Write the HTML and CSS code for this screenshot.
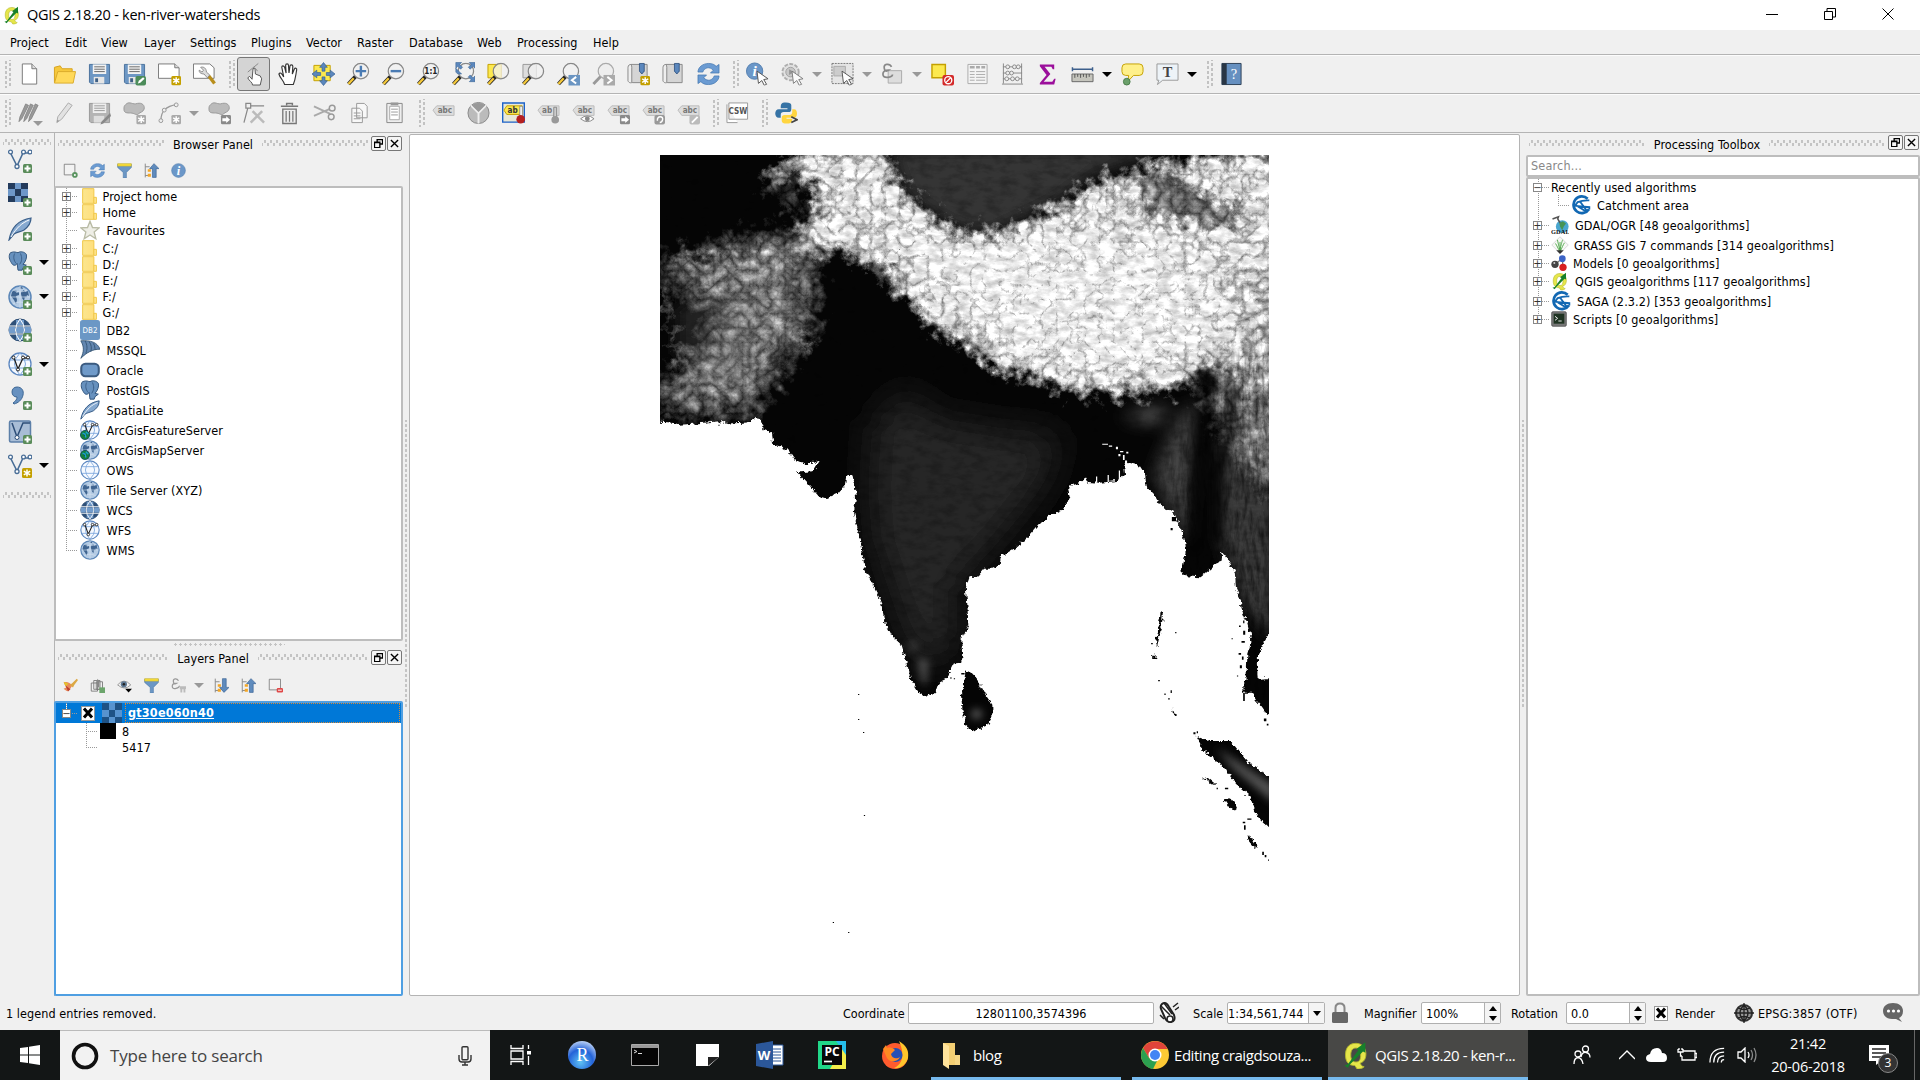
FILE: index.html
```html
<!DOCTYPE html>
<html lang="en">
<head>
<meta charset="utf-8">
<title>QGIS 2.18.20 - ken-river-watersheds</title>
<link rel="stylesheet" href="styles.css">
</head>
<body>
<svg class="defs" width="0" height="0">
<defs>
<linearGradient id="gold" x1="0" x2="1"><stop offset="0" stop-color="#fbe68f"/><stop offset="1" stop-color="#ffdf7c"/></linearGradient>
<radialGradient id="ball" cx=".45" cy=".75" r=".8"><stop offset="0" stop-color="#5fc3f5"/><stop offset=".55" stop-color="#2463d8"/><stop offset="1" stop-color="#cfe0fa"/></radialGradient>
<symbol id="badge-plus" viewBox="0 0 24 24"><rect x="15" y="15" width="9" height="9" rx="1.5" fill="#5a8c5a"/><path d="M19.500 16.500v6M16.500 19.500h6" stroke="#fff" stroke-width="2"/></symbol>
<symbol id="badge-star" viewBox="0 0 24 24"><rect x="14" y="14" width="10" height="10" rx="1.500" fill="#c4a000"/><path d="M19 15.500v7M15.800 17.200l6.400 3.600M15.800 20.800l6.400-3.600" stroke="#fff" stroke-width="1.500"/></symbol>
<symbol id="badge-star-g" viewBox="0 0 24 24"><rect x="14" y="14" width="10" height="10" rx="1.500" fill="#aaa"/><path d="M19 15.500v7M15.800 17.200l6.400 3.600M15.800 20.800l6.400-3.600" stroke="#fff" stroke-width="1.500"/></symbol>
<symbol id="badge-arrow" viewBox="0 0 24 24"><rect x="13.500" y="14" width="10.500" height="10" rx="1.500" fill="#8a8a8a"/><path d="M15 17.500h4v-2l4 3.500-4 3.500v-2h-4z" fill="#fff"/></symbol>
<symbol id="arrow-cursor" viewBox="0 0 24 24"><path d="M11.500 9l11.500 8-4.500.8 3 5-2.500 1-2.500-5-3.500 3z" fill="#fff" stroke="#555" stroke-width="1"/></symbol>
<symbol id="q" viewBox="0 0 24 24"><path d="M12 2C5 2 3 7 3 12s2 9 8 9l2 3c2 0 5-.5 6-2-2 0-3-2-3.500-3C19 18 20.500 15 20.500 11S18 2 12 2zm0 4c3 0 4 3 4 6 0 4-1 6-4 6s-4.500-2-4.500-6S9 6 12 6z" fill="#e6e64a" stroke="#b3b82e" stroke-width=".8"/><path d="M2 21l3-1 9-12-2-1 8-6v9l-2-1L7 20l-2 3z" fill="#17802a"/></symbol>
<symbol id="new" viewBox="0 0 24 24"><path d="M4.500 1.500h10l5 5v16h-15z" fill="#fff" stroke="#777"/><path d="M14.500 1.500v5h5" fill="#ddd" stroke="#777"/></symbol>
<symbol id="open" viewBox="0 0 24 24"><path d="M1.500 21V5l6-1.500 2 3H20V9" fill="#f6c83c" stroke="#d6a21e"/><path d="M1.500 21.500L5 9.500h18.500L21 21.500z" fill="#ffd95a" stroke="#d9aa2a"/></symbol>
<symbol id="save" viewBox="0 0 24 24"><path d="M1.500 2h21v20H3l-1.500-1.500z" fill="#6d97c4" stroke="#49719c"/><path d="M5 2h14v10H5z" fill="#f2f2f2"/><path d="M6.500 4.500h11M6.500 7h11M6.500 9.500h11" stroke="#666"/><path d="M6 15h11v7H6z" fill="#e6e6e6"/><path d="M7.500 16.500h3v4h-3z" fill="#3e5f85"/></symbol>
<symbol id="save-g" viewBox="0 0 24 24"><path d="M1.500 2h21v20H3l-1.500-1.500z" fill="#b4b4b4" stroke="#999"/><path d="M5 2h14v10H5z" fill="#eee"/><path d="M6.500 4.500h11M6.500 7h11M6.500 9.500h11" stroke="#999"/><path d="M6 15h11v7H6z" fill="#ddd"/><path d="M23 12l-9 9-1 3 3-1 8-8z" fill="#888"/></symbol>
<symbol id="saveas" viewBox="0 0 24 24"><use href="#save"/><rect x="13" y="14" width="11" height="10" rx="2" fill="#4c8c5a"/><path d="M15.500 22l1-3 4.500-3.500 1.500 1.500-4.500 4z" fill="#fff"/></symbol>
<symbol id="compose" viewBox="0 0 24 24"><path d="M.5 1.500h17l4.500 4v11H.5z" fill="#fff" stroke="#777"/><path d="M17.500 1.500v4H22" fill="#ddd" stroke="#777"/><use href="#badge-star"/></symbol>
<symbol id="manage" viewBox="0 0 24 24"><path d="M.5 1.500h17l4.500 4v11H.5z" fill="#fff" stroke="#777"/><path d="M16.500 14l6 8" stroke="#b88e1c" stroke-width="3.500"/><path d="M8 5c3-1 6 1 6 5l3.500 3-2.500 3-3.500-4C8 12 6 10 6.500 8l3 2 1.500-2z" fill="#ddd" stroke="#777" stroke-width=".8"/></symbol>
<symbol id="touch" viewBox="0 0 24 24"><path d="M11 23.500c0-3-3.500-4-5-7.500l2-1.500 2.500 3 1-11 2-.5.500 6 5 2 1.500 3-1.500 6.500z" fill="#fff" stroke="#555"/><path d="M6 10L17 1M12 5c2 2 3 1 4 4" stroke="#888" fill="none"/></symbol>
<symbol id="hand" viewBox="0 0 24 24"><path d="M8 23c-1-4-5-7-6-11 1-2 3-1 5 3L5 5c0-2 2-2 3 0l1.500 6L9 3c0-2 3-2 3 0l.5 8 1-7c0-2 3-2 3 0L16 12l2-5c1-2 3-1 2.500 1-1 5-1 9-3.500 15z" fill="#fff" stroke="#333" stroke-width="1.200"/></symbol>
<symbol id="panto" viewBox="0 0 24 24"><path d="M2 3h17v16H2z" fill="#fce94f" stroke="#c4a000"/><g fill="#5b87bd" stroke="#315e94" stroke-width=".7"><path d="M12 0l4 5h-2.500v4h-3V5H8zM12 24l4-5h-2.500v-4h-3v4H8zM0 12l5-4v2.500h4v3H5V16zM24 12l-5-4v2.500h-4v3h4V16z"/></g></symbol>
<symbol id="lens" viewBox="0 0 24 24"><path d="M1.500 22.500L9 14.500" stroke="#222" stroke-width="4"/><path d="M1.500 22.500L7 16.500" stroke="#f5c93b" stroke-width="2.500"/><circle cx="14.500" cy="9" r="8" fill="#f1f1f1" fill-opacity=".75" stroke="#888" stroke-width="1.300"/></symbol>
<symbol id="zin" viewBox="0 0 24 24"><use href="#lens"/><path d="M14.500 3.500v11M9 9h11" stroke="#4a7bb3" stroke-width="2.500"/></symbol>
<symbol id="zout" viewBox="0 0 24 24"><use href="#lens"/><path d="M9 9h11" stroke="#4a7bb3" stroke-width="2.500"/></symbol>
<symbol id="z11" viewBox="0 0 24 24"><use href="#lens"/><text x="14.500" y="12.200" font-size="8.500" font-weight="bold" text-anchor="middle" fill="#222">1:1</text></symbol>
<symbol id="zfull" viewBox="0 0 24 24"><use href="#lens"/><path d="M4 0h6L8 2l3 3-2 2-3-3-2 2zM24 0h-6l2 2-3 3 2 2 3-3 2 2zM24 20h-6l2-2-3-3 2-2 3 3 2-2zM4 10V6l6 6H6z" fill="#5b87bd" stroke="#3c6594" stroke-width=".6"/></symbol>
<symbol id="zsel" viewBox="0 0 24 24"><path d="M1 2h14v14H1z" fill="#fce94f" stroke="#c4a000"/><use href="#lens"/></symbol>
<symbol id="zlay" viewBox="0 0 24 24"><path d="M1 2h14v14H1z" fill="#ddd" stroke="#999"/><use href="#lens"/></symbol>
<symbol id="zlast" viewBox="0 0 24 24"><use href="#lens"/><path d="M12 13h12v11H12z" fill="#6b95c2"/><path d="M20 15l-4.500 3.500L20 22" fill="none" stroke="#fff" stroke-width="2"/></symbol>
<symbol id="znext" viewBox="0 0 24 24"><path d="M1.500 22.500L9 14.500" stroke="#999" stroke-width="3"/><circle cx="14.500" cy="9" r="8" fill="#eee" stroke="#aaa" stroke-width="1.300"/><path d="M12 13h12v11H12z" fill="#aaa"/><path d="M16 15l4.500 3.500L16 22" fill="none" stroke="#fff" stroke-width="2"/></symbol>
<symbol id="book" viewBox="0 0 24 24"><path d="M4 2h17v19H6c-2 0-2-2-2-2z" fill="#d5d5d5" stroke="#888"/><path d="M4 2c-3 0-3 3-3 4v13c1 3 4 2 4 2V5C5 3 4 2 4 2z" fill="#eee" stroke="#888"/><path d="M13 1h5v8l-2.500 3L13 9z" fill="#5b87bd" stroke="#274b78" stroke-width=".8"/></symbol>
<symbol id="booknew" viewBox="0 0 24 24"><use href="#book"/><use href="#badge-star"/></symbol>
<symbol id="refresh" viewBox="0 0 24 24"><path d="M1 10C1 5 6 1 12 1c4 0 6 1 8 3l3-2v9h-9l3-3c-4-4-9-3-11 2zM23 14c0 5-5 9-11 9-4 0-6-1-8-3l-3 2v-9h9l-3 3c4 4 9 3 11-2z" fill="#6b9bd2" stroke="#3d72ad" stroke-width=".7"/></symbol>
<symbol id="info" viewBox="0 0 24 24"><circle cx="12" cy="12" r="11" fill="#6b97c8" stroke="#5580b0"/><text x="12" y="19" text-anchor="middle" font-family="Liberation Serif" font-style="italic" font-weight="bold" font-size="20" fill="#fff">i</text></symbol>
<symbol id="identify" viewBox="0 0 24 24"><circle cx="9" cy="9" r="8.500" fill="#6b97c8" stroke="#5580b0"/><text x="9" y="14.500" text-anchor="middle" font-family="Liberation Serif" font-style="italic" font-weight="bold" font-size="16" fill="#fff">i</text><use href="#arrow-cursor"/></symbol>
<symbol id="gear" viewBox="0 0 24 24" opacity=".75"><circle cx="10" cy="10" r="8.500" fill="#ddd" stroke="#999" stroke-width="2" stroke-dasharray="4 1.500"/><circle cx="10" cy="10" r="5" fill="#bbb" stroke="#888"/><path d="M8.500 7l5 3-5 3z" fill="#777"/><use href="#arrow-cursor"/></symbol>
<symbol id="select" viewBox="0 0 24 24"><path d="M1 1h22v21H1z" fill="#e5e5e5" stroke="#777" stroke-dasharray="2 1"/><path d="M3 4h12v10H3z" fill="#ccc" stroke="#aaa"/><use href="#arrow-cursor"/></symbol>
<symbol id="eps" viewBox="0 0 24 24"><path d="M7.500 8.500h14v13h-14z" fill="#ddd" stroke="#aaa"/><path d="M11 4.500Q9.500 1.500 6 2T3.500 6.500 8 8Q2 8 2 12t5 3.500 5-3" fill="none" stroke="#888" stroke-width="1.800"/></symbol>
<symbol id="deselect" viewBox="0 0 24 24"><path d="M1 2h14v14H1z" fill="#fce94f" stroke="#c4a000" stroke-width="1.500"/><rect x="12" y="13" width="12" height="11" rx="2" fill="#d42a2a"/><circle cx="18" cy="18.500" r="3.700" fill="none" stroke="#fff" stroke-width="1.400"/><path d="M15.500 21l5-5" stroke="#fff" stroke-width="1.400"/></symbol>
<symbol id="table" viewBox="0 0 24 24"><path d="M2 2h20v20H2z" fill="#f4f4f4" stroke="#aaa"/><path d="M4 5h5M10.500 5h4M16 5h4" stroke="#aaa" stroke-width="2.500"/><path d="M4 9.500h5M10.500 9.500h9.500M4 12.500h5M10.500 12.500h9.500M4 15.500h5M10.500 15.500h9.500M4 18.500h5M10.500 18.500h9.500" stroke="#aaa"/></symbol>
<symbol id="abacus" viewBox="0 0 24 24"><path d="M2.500 1v21M21.500 1v21M2 4.500h20M2 11h20M2 17h20M1 22.500h22" stroke="#888" fill="none"/><g fill="#eee" stroke="#888"><circle cx="7" cy="4.500" r="2"/><circle cx="14" cy="4.500" r="2"/><circle cx="18" cy="4.500" r="2"/><circle cx="7" cy="11" r="2"/><circle cx="11" cy="11" r="2"/><circle cx="6" cy="17" r="2"/><circle cx="12" cy="17" r="2"/><circle cx="17" cy="17" r="2"/></g></symbol>
<symbol id="sigma" viewBox="0 0 24 24"><path d="M4 2h15v5h-1.500L16 4.500H9L15 12l-7 8h9l2-3h1.500L19 23H4v-1.500L11 13 4 4z" fill="#9b0f9b"/></symbol>
<symbol id="measure" viewBox="0 0 24 24"><path d="M1.500 5v4M22.500 5v4M1 7h22" stroke="#3d5f8c" stroke-width="1.500"/><path d="M1 12h22v8H1z" fill="#c5c5bd" stroke="#666"/><path d="M4 12v4M7 12v3M10 12v4M13 12v3M16 12v4M19 12v3" stroke="#555"/></symbol>
<symbol id="tip" viewBox="0 0 24 24"><path d="M5 1.500h14q4 0 4 4v4q0 4-4 4h-6L7 20l1-6.500H5q-4 0-4-4v-4q0-4 4-4z" fill="#fff08a" stroke="#c4a000"/><circle cx="6" cy="20" r="3.500" fill="#6ba06b" stroke="#4b7d4b"/></symbol>
<symbol id="textann" viewBox="0 0 24 24"><path d="M1 1.500h22v17H7L1.500 23 3 18.500H1z" fill="#edf3f8" stroke="#999"/><text x="12" y="15" text-anchor="middle" font-family="Liberation Serif" font-weight="bold" font-size="15" fill="#444">T</text></symbol>
<symbol id="help" viewBox="0 0 24 24"><path d="M2 1h20v22H2z" fill="#6690c0" stroke="#2d4056"/><path d="M2 1h5v22H2z" fill="#293645"/><text x="14.500" y="17" text-anchor="middle" font-family="Liberation Serif" font-size="15" fill="#fff">?</text></symbol>
<symbol id="pencils" viewBox="0 0 24 24"><g fill="#999" stroke="#777" stroke-width=".7"><path d="M1 21l1-5L8 2.500l3 1.500L4 18z"/><path d="M6 21l1-5 6-13.500L16 4 9 18z"/><path d="M11 21l1-5 6-13.500L21 4l-7 14z"/></g></symbol>
<symbol id="pencil" viewBox="0 0 24 24"><path d="M4 22l1-6L16 1.500l4 2.500L9 18.500z" fill="#e2e2e2" stroke="#aaa"/><path d="M4 22l.5-3 2 1z" fill="#999"/></symbol>
<symbol id="blob-star" viewBox="0 0 24 24"><path d="M3 3c4-4 7 1 12-1 5-1 8 2 7 6-1 3-4 3-6 5s-4-1-8-1-7 0-7-4 1-4 2-5z" fill="#bbb" stroke="#999"/><use href="#badge-star-g"/></symbol>
<symbol id="blob-arrow" viewBox="0 0 24 24"><path d="M3 3c4-4 7 1 12-1 5-1 8 2 7 6-1 3-4 3-6 5s-4-1-8-1-7 0-7-4 1-4 2-5z" fill="#bbb" stroke="#999"/><use href="#badge-arrow"/></symbol>
<symbol id="curve" viewBox="0 0 24 24"><path d="M3 20C3 10 8 5 20 3" fill="none" stroke="#999" stroke-width="1.300"/><circle cx="3" cy="20" r="2" fill="#eee" stroke="#999"/><circle cx="6.500" cy="9" r="2" fill="#eee" stroke="#999"/><circle cx="19" cy="3.500" r="2" fill="#eee" stroke="#999"/><use href="#badge-star-g"/></symbol>
<symbol id="node" viewBox="0 0 24 24"><path d="M3 2h5v5H3zM5 7L1 22M8 4.500h14" fill="none" stroke="#888" stroke-width="1.300"/><path d="M10 10l12 12M20 10L8 22" stroke="#bbb" stroke-width="2.600"/></symbol>
<symbol id="trash" viewBox="0 0 24 24"><path d="M9 4V2h6v2M3 5h18" stroke="#777" stroke-width="1.500" fill="none"/><path d="M5 8h14v15H5z" fill="#eee" stroke="#777" stroke-width="1.400"/><path d="M8.500 10v11M12 10v11M15.500 10v11" stroke="#777" stroke-width="1.300"/></symbol>
<symbol id="cut" viewBox="0 0 24 24"><path d="M1 5l17 8M1 15l16-7" stroke="#aaa" stroke-width="2"/><circle cx="20" cy="7" r="3" fill="none" stroke="#999" stroke-width="1.500"/><circle cx="19" cy="16" r="3" fill="none" stroke="#999" stroke-width="1.500"/></symbol>
<symbol id="copy" viewBox="0 0 24 24"><path d="M9 2h8l3 3v12H9zM4 7h8l3 3v12H4z" fill="#f8f8f8" stroke="#999"/><path d="M6 12h7M6 15h7M6 18h7" stroke="#999"/></symbol>
<symbol id="paste" viewBox="0 0 24 24"><path d="M4 2h16v20H4z" fill="#eee" stroke="#888"/><path d="M7 5h10v14H7z" fill="#fff" stroke="#aaa"/><path d="M8 1h8v3H8z" fill="#999"/><path d="M8.500 8h7M8.500 11h7M8.500 14h7" stroke="#999"/></symbol>
<symbol id="abc" viewBox="0 0 24 24"><path d="M1 9l4-4.500h18v10H5z" fill="#ddd" stroke="#bbb"/><text x="13.500" y="12.500" text-anchor="middle" font-size="8.500" font-weight="bold" fill="#777">abc</text></symbol>
<symbol id="pie" viewBox="0 0 24 24"><circle cx="12" cy="12" r="11" fill="#bbb" stroke="#888"/><path d="M12 12v11M12 12L4 4M12 12l8-8" stroke="#eee" stroke-width="2"/><path d="M12 11L5 4q7-5 14 0z" fill="#999"/></symbol>
<symbol id="abhi" viewBox="0 0 24 24"><path d="M.7 1.500h22.600v20H.7z" fill="#e8e8d8" stroke="#1d62c8" stroke-width="1.500"/><path d="M2 9l3-4.500h16v9H5z" fill="#fce94f" stroke="#c4a000"/><text x="11" y="12" text-anchor="middle" font-size="8.500" font-weight="bold" fill="#333">ab</text><path d="M18.500 5h3v12h-3z" fill="#eee" stroke="#777" stroke-width=".7"/><circle cx="19.500" cy="18.500" r="4.500" fill="#b52020"/></symbol>
<symbol id="abpin" viewBox="0 0 24 24"><path d="M1 9l4-4.500h18v10H5z" fill="#ddd" stroke="#bbb"/><text x="10.500" y="12.500" text-anchor="middle" font-size="8.500" font-weight="bold" fill="#777">ab</text><path d="M17.500 6h3v11h-3z" fill="#ccc" stroke="#888"/><circle cx="19" cy="19" r="4" fill="#999"/></symbol>
<symbol id="abeye" viewBox="0 0 24 24"><use href="#abc"/><path d="M9 18q7-6 14 0-7 6-14 0z" fill="#fff" stroke="#888"/><circle cx="16" cy="18" r="2.500" fill="#888"/></symbol>
<symbol id="abarrow" viewBox="0 0 24 24"><use href="#abc"/><use href="#badge-arrow"/></symbol>
<symbol id="abrot" viewBox="0 0 24 24"><use href="#abc"/><rect x="13" y="14" width="11" height="10" rx="2" fill="#999"/><path d="M16 20q0-4 3-4t2.500 3-3 3" fill="none" stroke="#fff" stroke-width="1.500"/></symbol>
<symbol id="abedit" viewBox="0 0 24 24"><use href="#abc"/><rect x="13" y="14" width="11" height="10" rx="2" fill="#bbb"/><path d="M15.500 22l6-6" stroke="#fff" stroke-width="2"/></symbol>
<symbol id="csw" viewBox="0 0 24 24"><path d="M1 3v19h11M3 1.500h19.500v17H3z" fill="#fff" stroke="#999"/><text x="12.500" y="13" text-anchor="middle" font-size="8.500" font-weight="bold" fill="#555">CSW</text></symbol>
<symbol id="python" viewBox="0 0 24 24"><path d="M11.500 1C6 1 6 3 6 7h7v1H4c-5 0-5 9 0 9h2v-3q0-3 3-3h5q3 0 3-3V4q0-3-5.500-3z" fill="#3673a5"/><path d="M12.500 23c5 0 5.500-2 5.500-5h-6v-1h8c4 0 4-9 0-9h-2v3q0 3-3 3h-5q-3 0-3 3v3q0 3 5.500 3z" fill="#ffd540"/><path d="M17 16l6 3-6 3" fill="none" stroke="#444" stroke-width="1.700"/></symbol>
<symbol id="vee" viewBox="0 0 24 24"><path d="M2.500 4L9 17l6-13h7" fill="none" stroke="#486d96" stroke-width="1.600"/><g fill="#fff" stroke="#486d96" stroke-width="1.300"><circle cx="2.500" cy="3" r="1.900"/><circle cx="9" cy="17.500" r="2"/><circle cx="15.500" cy="3" r="1.900"/><circle cx="22" cy="3" r="1.900"/></g></symbol>
<symbol id="addvec" viewBox="0 0 24 24"><use href="#vee"/><use href="#badge-plus"/></symbol>
<symbol id="newvec" viewBox="0 0 24 24"><use href="#vee"/><use href="#badge-star"/></symbol>
<symbol id="raster" viewBox="0 0 24 24"><path d="M0 0h20v19H0z" fill="#6d97c8"/><path d="M0 0h7v6H0zM13 0h7v6h-7zM7 6h6v7H7zM0 13h7v6H0zM13 13h7v6h-7z" fill="#233b5c"/></symbol>
<symbol id="addras" viewBox="0 0 24 24"><use href="#raster"/><use href="#badge-plus"/></symbol>
<symbol id="feather" viewBox="0 0 24 24"><path d="M1 23C3 12 10 3 23 1c0 6-3 9-7 12-4 2-7 2-10 4z" fill="#86a9d0" stroke="#385d88" stroke-width="1.200"/><path d="M3 20C9 10 14 6 21 3" fill="none" stroke="#fff"/></symbol>
<symbol id="addfea" viewBox="0 0 24 24"><use href="#feather"/><use href="#badge-plus"/></symbol>
<symbol id="eleph" viewBox="0 0 24 24"><path d="M3 2c5-2 7 0 9 0 3-2 8-1 10 2 1 4-1 9-4 12l4 1-4 3-1 3h-5l-1-8c-2 3-5 3-7-1C2 11 0 6 3 2z" fill="#6791be" stroke="#34577f" stroke-width="1.200"/><path d="M8 3c-2 4-1 9 2 12M15 3c2 5 2 9-1 13" fill="none" stroke="#34577f"/></symbol>
<symbol id="addele" viewBox="0 0 24 24"><svg width="20" height="20" viewBox="0 0 24 24"><use href="#eleph"/></svg><use href="#badge-plus"/></symbol>
<symbol id="globe" viewBox="0 0 24 24"><circle cx="12" cy="12" r="11" fill="#b4cbe4" stroke="#5c87b8" stroke-width="1.500"/><path d="M4 7l2-2 3 1-1 2 3-1v3l-3 1 1 4-1 4-2-4-3-4zM13 7l3-2 1 2 3-1 1 5-2-1-1 3-1-2-1 5-2-3-1-4zM11 3l3-1 1 2z" fill="#3f6490"/><path d="M2 12h20M12 1v22M5 5q7 4 14 0M5 19q7-4 14 0" stroke="#d5e2f0" fill="none" stroke-width=".7"/></symbol>
<symbol id="addglobe" viewBox="0 0 24 24"><use href="#globe"/><use href="#badge-plus"/></symbol>
<symbol id="wcs" viewBox="0 0 24 24"><circle cx="12" cy="12" r="11" fill="#2f5078" stroke="#2f5078"/><path d="M8 2h8v5H8zM1 9h6v6H1zM8 9h8v6H8zM17 9h6v6h-6zM8 17h8v5H8z" fill="#739ccb"/><path d="M1 8h22M1 16h22M12 1q-9 11 0 22M12 1q9 11 0 22" stroke="#fff" fill="none"/></symbol>
<symbol id="addwcs" viewBox="0 0 24 24"><use href="#wcs"/><use href="#badge-plus"/></symbol>
<symbol id="ows" viewBox="0 0 24 24"><circle cx="12" cy="12" r="11" fill="#f5f9ff" stroke="#5c87c0" stroke-width="1.300"/><path d="M2 8h20M2 16h20M12 1q-11 11 0 22M12 1q11 11 0 22" stroke="#7ba6dc" fill="none"/></symbol>
<symbol id="wfs" viewBox="0 0 24 24"><use href="#ows"/><path d="M6 6l4 11 5-11h5" fill="none" stroke="#222" stroke-width="1.300"/><g fill="#fff" stroke="#222"><circle cx="5.500" cy="5.500" r="1.500"/><circle cx="10" cy="17.500" r="1.500"/><circle cx="15" cy="5.500" r="1.500"/><circle cx="20" cy="5.500" r="1.500"/></g></symbol>
<symbol id="addwfs" viewBox="0 0 24 24"><use href="#wfs"/><use href="#badge-plus"/></symbol>
<symbol id="comma" viewBox="0 0 24 24"><path d="M9 1c5 0 7 4 6 8-1 5-5 8-9 9l-1-1c3-2 4-4 4-6-3 0-5-2-5-5s2-5 5-5z" fill="#6791c0" stroke="#3f6895"/><use href="#badge-plus"/></symbol>
<symbol id="virt" viewBox="0 0 24 24"><rect x="1.500" y="1" width="21" height="21" rx="1.500" fill="#a8bdd6" stroke="#5c7fa8" stroke-width="1.500"/><path d="M4 3l5 14 6-14h7" fill="none" stroke="#2d4e78" stroke-width="1.500"/><circle cx="9" cy="17.500" r="2" fill="#fff" stroke="#2d4e78"/><use href="#badge-plus"/></symbol>
<symbol id="arcf" viewBox="0 0 24 24"><use href="#wfs"/><circle cx="6" cy="18" r="5.500" fill="#15803d" stroke="#124b60"/><path d="M3 16l3 1 1 4M7 14l3 3" stroke="#1c9ed0" stroke-width="1.800"/></symbol>
<symbol id="arcm" viewBox="0 0 24 24"><use href="#globe"/><circle cx="6" cy="18" r="5.500" fill="#15803d" stroke="#124b60"/><path d="M3 16l3 1 1 4M7 14l3 3" stroke="#1c9ed0" stroke-width="1.800"/></symbol>
<symbol id="fold" viewBox="0 0 24 24" preserveAspectRatio="none"><path d="M1 1h18v22H1z" fill="url(#gold)" stroke="#efc747" stroke-width="1.500"/><path d="M19 14h4v9h-4z" fill="#ffe58f" stroke="#efc747" stroke-width="1.500"/></symbol>
<symbol id="star" viewBox="0 0 24 24"><path d="M12 1.500l3 7.500 8 .5-6 5 2 8-7-4.500-7 4.500 2-8-6-5 8-.5z" fill="#eeeee6" stroke="#b9bba5" stroke-width="1.600"/></symbol>
<symbol id="db2" viewBox="0 0 24 24"><rect width="24" height="24" rx="3" fill="#6b97c5"/><text x="12" y="15.500" text-anchor="middle" font-size="9.500" fill="#fff">DB2</text></symbol>
<symbol id="mssql" viewBox="0 0 24 24"><path d="M1 1c12-1 20 2 23 10-9 0-16 4-23 11 4-8 4-14 0-21z" fill="#6487b0" stroke="#30506f"/><path d="M6 1c3 5 3 10 1 15M11 2c3 4 3 8 2 12M16 4c2 3 2 6 2 8" stroke="#30506f" fill="none"/></symbol>
<symbol id="oracle" viewBox="0 0 24 24"><rect x="1.500" y="4.500" width="21" height="15" rx="5" fill="#6f9ac9" stroke="#3b5b80" stroke-width="2.500"/></symbol>
<symbol id="addlay" viewBox="0 0 24 24"><path d="M2 2h17v17H2z" fill="#f2f2f2" stroke="#777" stroke-width="1.300"/><circle cx="19" cy="19" r="4.500" fill="#5a9460"/><circle cx="19" cy="19" r="1.600" fill="#fff"/></symbol>
<symbol id="remlay" viewBox="0 0 24 24"><path d="M2 2h18v17H2z" fill="#f2f2f2" stroke="#777" stroke-width="1.300"/><rect x="14" y="16" width="10" height="7" rx="2" fill="#e04848"/><path d="M16 19.500h6" stroke="#fff" stroke-width="1.500"/></symbol>
<symbol id="filter" viewBox="0 0 24 24"><path d="M1 2h22v5l-8 8v9h-5v-9L1 7z" fill="#6b97c5" stroke="#4f7bac"/><path d="M1 1h22v4H1z" fill="#f5dc3a" stroke="#c9ae20" stroke-width=".7"/></symbol>
<symbol id="treeup" viewBox="0 0 24 24"><path d="M2 1v22M2 6h7M2 20h7" stroke="#888" fill="none" stroke-width="1.500"/><path d="M6 10h5v4H6zM6 17h5v5H6z" fill="#f5a623"/><path d="M16 1l8 8h-4.500v14h-6V9H9z" fill="#5f8bbd" stroke="#355f91"/></symbol>
<symbol id="treedn" viewBox="0 0 24 24"><path d="M2 1v22M2 6h7M2 20h7" stroke="#888" fill="none" stroke-width="1.500"/><path d="M6 10h5v4H6zM6 17h5v5H6z" fill="#f5a623"/><path d="M16 23l8-8h-4.500V1h-6v14H9z" fill="#5f8bbd" stroke="#355f91"/></symbol>
<symbol id="brush" viewBox="0 0 24 24"><path d="M1 7c5-2 10 0 14 5l-6 9C6 22 3 18 1 17l4-2z" fill="#e98a5a"/><path d="M1 6l8 3-5 4z" fill="#e3c52c"/><path d="M4 12l8 6-4 3z" fill="#bb3d32"/><path d="M11 11l4-3 7-7 2 2-6 8-2 4z" fill="#dca844"/></symbol>
<symbol id="group" viewBox="0 0 24 24"><path d="M2 8h10v13H2zM6 4h10v14H6zM10 6h10v12H10z" fill="none" stroke="#777" stroke-width="1.400"/><path d="M12 1l3 4v10h-4V5z" fill="#888"/><rect x="15" y="15" width="9" height="9" fill="#6ca56c"/></symbol>
<symbol id="eye" viewBox="0 0 24 24"><path d="M1 11q10-12 21 0-10 10-21 0z" fill="#f4f4f4" stroke="#888" stroke-width="1.300"/><circle cx="11" cy="10" r="5" fill="#5e7893"/><circle cx="11" cy="10" r="2" fill="#222"/><path d="M13 17h11l-5.500 6z" fill="#000"/></symbol>
<symbol id="epsf" viewBox="0 0 24 24"><path d="M12 4.500Q10 1 6.500 1.500T4 6.500 9 8.500Q2 8 2 13t6 3.500 5-4" fill="none" stroke="#999" stroke-width="2"/><path d="M14 13h10v4l-1 1v5h-3v-5h-2v5h-3v-5l-1-1z" fill="#bbb"/></symbol>
<symbol id="saga" viewBox="0 0 24 24"><path d="M20 4.500A10 10 0 1 0 21.500 17" fill="none" stroke="#1268b3" stroke-width="3.200"/><path d="M22 6.500Q14 6 8 8.500L5 13l17 1.500v3M4 11l15 9.500M11 8l8 11" fill="none" stroke="#1268b3" stroke-width="2.200"/></symbol>
<symbol id="gdal" viewBox="0 0 24 24"><circle cx="15" cy="14" r="8.500" fill="#4aa6cf"/><path d="M11 9l5-2 4 3-3 4-2 5-3-5z" fill="#469454"/><path d="M2 4l8-3-1 3 3 5" stroke="#555" stroke-width="2" fill="none"/><text x="0" y="23.500" font-size="8.500" font-family="Liberation Serif" font-weight="bold" fill="#111">GDAL</text></symbol>
<symbol id="grass" viewBox="0 0 24 24"><path d="M12 1l11 11-11 11L1 12z" fill="#f6f8f4" stroke="#ccc"/><path d="M12 21C9 16 8 13 6 10M12 21V8M12 21c3-6 4-9 6-12M12 19C10 12 9.500 9 8.500 5M12 19c1.500-8 2.500-11 3.500-14" stroke="#4aa545" stroke-width="1.200" fill="none"/><path d="M7 19h10l-5 5z" fill="#333"/></symbol>
<symbol id="models" viewBox="0 0 24 24"><path d="M5 15L17 5l1 14" stroke="#777" fill="none" stroke-width="2"/><circle cx="6" cy="14" r="5.500" fill="#444"/><circle cx="17" cy="5.500" r="5" fill="#3b63c6"/><circle cx="18" cy="18.500" r="5.500" fill="#d81f1f"/><circle cx="5" cy="12" r="1.500" fill="#ccc"/></symbol>
<symbol id="script" viewBox="0 0 24 24"><rect x="1" y="1" width="22" height="22" rx="2" fill="#777" stroke="#444"/><rect x="4" y="4" width="16" height="15" fill="#1f3322"/><path d="M6 8l4 3-4 3M11 15h5" stroke="#e5e5e5" fill="none" stroke-width="1.500"/></symbol>
</defs>
</svg>

<div class="window">
<header class="title"><svg class="i20"><use href="#q"/></svg><span class="seg">QGIS 2.18.20 - ken-river-watersheds</span>
<div class="winbtns"><svg viewBox="0 0 12 12"><path d="M0 6.500h12"/></svg><svg viewBox="0 0 12 12"><path d="M.5 3.500h8v8h-8zM3 3.500v-3h8.500V9H9"/></svg><svg viewBox="0 0 12 12"><path d="M.5.5l11 11M11.500.5l-11 11"/></svg></div></header>
<nav class="menu"><span style="width:55px">Project</span><span style="width:36px">Edit</span><span style="width:43px">View</span><span style="width:46px">Layer</span><span style="width:61px">Settings</span><span style="width:55px">Plugins</span><span style="width:51px">Vector</span><span style="width:52px">Raster</span><span style="width:68px">Database</span><span style="width:40px">Web</span><span style="width:76px">Processing</span><span>Help</span></nav>
<div class="bar">
<i class="h first"></i><b><svg><use href="#new"/></svg></b><b><svg><use href="#open"/></svg></b><b><svg><use href="#save"/></svg></b><b><svg><use href="#saveas"/></svg></b><b><svg><use href="#compose"/></svg></b><b><svg><use href="#manage"/></svg></b>
<i class="h"></i><b class="on"><svg><use href="#touch"/></svg></b><b><svg><use href="#hand"/></svg></b><b><svg><use href="#panto"/></svg></b><b><svg><use href="#zin"/></svg></b><b><svg><use href="#zout"/></svg></b><b><svg><use href="#z11"/></svg></b><b><svg><use href="#zfull"/></svg></b><b><svg><use href="#zsel"/></svg></b><b><svg><use href="#zlay"/></svg></b><b><svg><use href="#zlast"/></svg></b><b><svg><use href="#znext"/></svg></b><b><svg><use href="#booknew"/></svg></b><b><svg><use href="#book"/></svg></b><b><svg><use href="#refresh"/></svg></b>
<i class="h"></i><b><svg><use href="#identify"/></svg></b><b><svg><use href="#gear"/></svg></b><i class="dd g"></i><b><svg><use href="#select"/></svg></b><i class="dd g"></i><b><svg><use href="#eps"/></svg></b><i class="dd g"></i><b><svg><use href="#deselect"/></svg></b><b><svg><use href="#table"/></svg></b><b><svg><use href="#abacus"/></svg></b><b><svg><use href="#sigma"/></svg></b><b><svg><use href="#measure"/></svg></b><i class="dd"></i><b><svg><use href="#tip"/></svg></b><b><svg><use href="#textann"/></svg></b><i class="dd"></i>
<i class="h"></i><b><svg><use href="#help"/></svg></b>
</div>
<div class="bar">
<i class="h first"></i><b><svg><use href="#pencils"/></svg><i class="dd g corner"></i></b><b><svg><use href="#pencil"/></svg></b><b><svg><use href="#save-g"/></svg></b><b><svg><use href="#blob-star"/></svg></b><b><svg><use href="#curve"/></svg></b><i class="dd g"></i><b><svg><use href="#blob-arrow"/></svg></b><b><svg><use href="#node"/></svg></b><b><svg><use href="#trash"/></svg></b><b><svg><use href="#cut"/></svg></b><b><svg><use href="#copy"/></svg></b><b><svg><use href="#paste"/></svg></b>
<i class="h"></i><b><svg><use href="#abc"/></svg></b><b><svg><use href="#pie"/></svg></b><b><svg><use href="#abhi"/></svg></b><b><svg><use href="#abpin"/></svg></b><b><svg><use href="#abeye"/></svg></b><b><svg><use href="#abarrow"/></svg></b><b><svg><use href="#abrot"/></svg></b><b><svg><use href="#abedit"/></svg></b>
<i class="h"></i><b><svg><use href="#csw"/></svg></b><i class="h"></i><b><svg><use href="#python"/></svg></b>
</div>

<main>
<aside class="side">
<i class="hh"></i>
<b><svg><use href="#addvec"/></svg></b><b><svg><use href="#addras"/></svg></b><b><svg><use href="#addfea"/></svg></b><b><svg><use href="#addele"/></svg><i class="dd"></i></b><b><svg><use href="#addglobe"/></svg><i class="dd"></i></b><b><svg><use href="#addwcs"/></svg></b><b><svg><use href="#addwfs"/></svg><i class="dd"></i></b><b><svg><use href="#comma"/></svg></b><b><svg><use href="#virt"/></svg></b><b><svg><use href="#newvec"/></svg><i class="dd"></i></b>
<i class="hh"></i>
</aside>

<section class="left">
<div class="ptitle"><i class="hh"></i><span>Browser Panel</span><i class="hh"></i><u><svg viewBox="0 0 10 10"><path d="M3.500 3.500v-3h6v5h-3M.5 3.500h6v6h-6zM.5 4h6"/></svg></u><u><svg viewBox="0 0 10 10"><path d="M1 1l8 8M9 1L1 9"/></svg></u></div>
<div class="pbar"><b><svg><use href="#addlay"/></svg></b><b><svg><use href="#refresh"/></svg></b><b><svg><use href="#filter"/></svg></b><b><svg><use href="#treeup"/></svg></b><b><svg><use href="#info"/></svg></b></div>
<div class="tree browser">
<p class="s"><i class="br"><em>+</em></i><svg class="f"><use href="#fold"/></svg>Project home</p>
<p class="s"><i class="br"><em>+</em></i><svg class="f"><use href="#fold"/></svg>Home</p>
<p><i class="br"></i><svg><use href="#star"/></svg>Favourites</p>
<p class="s"><i class="br"><em>+</em></i><svg class="f"><use href="#fold"/></svg>C:/</p>
<p class="s"><i class="br"><em>+</em></i><svg class="f"><use href="#fold"/></svg>D:/</p>
<p class="s"><i class="br"><em>+</em></i><svg class="f"><use href="#fold"/></svg>E:/</p>
<p class="s"><i class="br"><em>+</em></i><svg class="f"><use href="#fold"/></svg>F:/</p>
<p class="s"><i class="br"><em>+</em></i><svg class="f"><use href="#fold"/></svg>G:/</p>
<p><i class="br"></i><svg><use href="#db2"/></svg>DB2</p>
<p><i class="br"></i><svg><use href="#mssql"/></svg>MSSQL</p>
<p><i class="br"></i><svg><use href="#oracle"/></svg>Oracle</p>
<p><i class="br"></i><svg><use href="#eleph"/></svg>PostGIS</p>
<p><i class="br"></i><svg><use href="#feather"/></svg>SpatiaLite</p>
<p><i class="br"></i><svg><use href="#arcf"/></svg>ArcGisFeatureServer</p>
<p><i class="br"></i><svg><use href="#arcm"/></svg>ArcGisMapServer</p>
<p><i class="br"></i><svg><use href="#ows"/></svg>OWS</p>
<p><i class="br"></i><svg><use href="#globe"/></svg>Tile Server (XYZ)</p>
<p><i class="br"></i><svg><use href="#wcs"/></svg>WCS</p>
<p><i class="br"></i><svg><use href="#wfs"/></svg>WFS</p>
<p><i class="br end"></i><svg><use href="#globe"/></svg>WMS</p>
</div>
<i class="dots"></i>
<div class="ptitle low"><i class="hh"></i><span>Layers Panel</span><i class="hh"></i><u><svg viewBox="0 0 10 10"><path d="M3.500 3.500v-3h6v5h-3M.5 3.500h6v6h-6zM.5 4h6"/></svg></u><u><svg viewBox="0 0 10 10"><path d="M1 1l8 8M9 1L1 9"/></svg></u></div>
<div class="pbar"><b><svg><use href="#brush"/></svg></b><b><svg><use href="#group"/></svg></b><b><svg><use href="#eye"/></svg></b><b><svg><use href="#filter"/></svg></b><b><svg><use href="#epsf"/></svg></b><i class="dd g"></i><b><svg><use href="#treedn"/></svg></b><b><svg><use href="#treeup"/></svg></b><b><svg><use href="#remlay"/></svg></b></div>
<div class="tree layers">
<p class="sel"><i class="br end"><em>−</em></i><i class="check"><svg viewBox="0 0 12 12"><path d="M2 1.500l8 9M10 1.500l-8 9"/></svg></i><svg class="rs" viewBox="0 0 20 20"><path d="M0 0h20v20H0z" fill="#5793cf"/><path d="M0 0h7v7H0zM13 0h7v7h-7zM7 7h6v7H7zM0 14h7v6H0zM13 14h7v6h-7z" fill="#1e5285"/></svg><strong>gt30e060n40</strong></p>
<p class="s leaf"><i class="br"></i><i class="sw"></i>8</p>
<p class="s leaf"><i class="br end"></i><i class="sw none"></i>5417</p>
</div>
</section>

<i class="split"></i>
<section class="canvas">
<svg class="map" viewBox="660 155 609 800" width="609" height="800">
<defs>
<filter id="coast" x="-5%" y="-5%" width="110%" height="110%" color-interpolation-filters="sRGB"><feTurbulence type="fractalNoise" baseFrequency=".22" numOctaves="3" seed="4"/><feDisplacementMap in="SourceGraphic" scale="6" xChannelSelector="R" yChannelSelector="G"/></filter>
<filter id="b4" x="-20%" y="-20%" width="140%" height="140%"><feGaussianBlur stdDeviation="4"/></filter>
<filter id="b9" x="-20%" y="-20%" width="140%" height="140%"><feGaussianBlur stdDeviation="8"/></filter>
<filter id="b18" x="-20%" y="-20%" width="140%" height="140%"><feGaussianBlur stdDeviation="18"/></filter>
<filter id="relief" filterUnits="userSpaceOnUse" x="630" y="125" width="670" height="860" color-interpolation-filters="sRGB"><feTurbulence type="fractalNoise" baseFrequency=".09" numOctaves="5" seed="21" result="n"/><feDisplacementMap in="SourceGraphic" in2="n" scale="34" xChannelSelector="R" yChannelSelector="G" result="h"/><feTurbulence type="turbulence" baseFrequency=".07" numOctaves="6" seed="12"/><feColorMatrix values="1 0 0 0 0 1 0 0 0 0 1 0 0 0 0 0 0 0 0 1" result="v"/><feComposite in="h" in2="v" operator="arithmetic" k1="1.700" k2="1" k3="0" k4="-.26"/><feColorMatrix values="1 0 0 0 0 0 1 0 0 0 0 0 1 0 0 0 0 0 0 1"/></filter>
<filter id="grain" x="0" y="0" width="100%" height="100%" color-interpolation-filters="sRGB"><feTurbulence type="fractalNoise" baseFrequency=".07 .14" numOctaves="5" seed="3"/><feColorMatrix values=".55 0 0 0 .66 .55 0 0 0 .66 .55 0 0 0 .66 0 0 0 0 1"/></filter>
<filter id="streak" x="0" y="0" width="100%" height="100%" color-interpolation-filters="sRGB"><feTurbulence type="fractalNoise" baseFrequency=".2 .05" numOctaves="4" seed="7"/><feColorMatrix values="2 0 0 0 -.25 2 0 0 0 -.25 2 0 0 0 -.25 0 0 0 0 1"/></filter>
<mask id="land" maskUnits="userSpaceOnUse" x="660" y="155" width="609" height="800"><g filter="url(#coast)"><g transform="translate(640 400) scale(.41454 .34436)" fill="#fff">
<path d="M10-760H1560V640L1517 680 1500 715 1488 760 1490 810 1512 808 1540 810V960L1517 920 1500 890 1485 870 1478 850 1456 850 1455 815 1463 810 1465 740 1475 700 1465 650 1452 610 1448 575 1438 550 1435 500 1425 480 1415 455 1405 440 1403 470 1390 475 1370 495 1350 515 1320 512 1306 500 1312 465 1318 435 1312 395 1300 365 1290 330 1270 318 1252 300 1238 270 1222 250 1218 215 1205 190 1180 182 1168 190 1170 215 1150 235 1110 240 1080 238 1075 225 1060 240 1040 248 1033 262 1038 285 1020 318 985 338 960 365 935 400 905 430 870 455 868 480 850 490 830 490 815 512 795 515 786 545 790 600 792 655 775 695 778 762 757 765 742 800 740 810 720 822 712 850 690 862 670 845 655 815 645 770 630 710 608 685 590 640 580 580 560 535 542 490 535 430 525 375 516 325 521 285 518 250 512 215 500 220 497 245 480 270 450 285 430 278 410 250 376 206 386 210 418 207 434 176 420 182 395 184 370 170 358 148 340 135 322 130 318 95 298 85 290 55 275 52 260 65 215 68 195 62 120 70 95 72 75 65 10 60Z"/>
<path d="M785 785L800 795 815 815 830 850 850 885 850 920 838 945 802 960 785 945 778 900 774 855 782 825ZM1340 975L1375 990 1425 990 1445 1020 1465 1050 1517 1092 1550 1110V1270L1517 1240 1488 1208 1472 1150 1438 1115 1400 1055 1360 1020ZM1358 1095L1372 1099 1388 1115 1378 1113ZM1410 1160L1422 1155 1440 1180 1438 1195 1420 1178ZM1466 1265L1475 1268 1490 1298 1482 1300 1468 1280ZM1256 616L1261 618 1260 640 1254 680 1248 716 1245 705 1252 650ZM1238 740L1244 740 1242 754 1238 752ZM1284 896L1292 910 1292 918 1286 912Z"/></g></g></mask>
</defs>
<g mask="url(#land)">
<path d="M650 145h630v820H650z" fill="#050505"/>
<g filter="url(#b9)"><g transform="translate(640 140) scale(.41454 .33333)">
<path d="M90 500L160 440 270 520 260 690 150 720 90 640Z" fill="#202020"/>
<path d="M600 20H1300L1100 100 1000 190 830 290 740 250 640 160Z" fill="#363636"/>
<path d="M1300 1180L1240 1000 1290 850 1340 780 1330 1000 1320 1200Z" fill="#444"/>
<path d="M1400 900L1530 800V1500L1460 1400 1400 1200Z" fill="#3c3c3c"/>
<path d="M1160 830L1220 810 1280 800 1240 850Z" fill="#666"/></g></g>
<g filter="url(#b18)"><g transform="translate(640 140) scale(.41454 .33333)">
<path d="M560 850L650 740 700 830 900 870 1020 880 980 1030 850 1230 760 1340 770 1500 700 1600 640 1500 560 1200 550 1050Z" fill="#252525"/></g></g>
<g filter="url(#relief)" style="mix-blend-mode:screen">
<path d="M600 100h730v920H600z" fill="#000"/>
<g filter="url(#b18)"><g transform="translate(640 140) scale(.41454 .33333)">
<path d="M0 360L150 320 300 250 420 300 440 420 420 640 360 660 310 780 290 850 0 830 20 700 90 700 130 620 200 480 60 480Z" fill="#757575"/>
<path d="M1330 760L1460 650 1620 600V1150L1500 1050 1440 960Z" fill="#808080"/></g></g>
<g filter="url(#b9)"><g transform="translate(640 140) scale(.41454 .33333)">
<path d="M290 190L310 90 400 30 560 0 620 90 650 160 710 230 800 285 880 260 1000 200 1080 130 1200 85 1400 40 1600 0V700L1450 720 1410 690 1370 680 1290 750 1180 770 1050 760 940 715 860 690 780 620 700 560 650 490 600 430 550 370 480 330 400 345 370 280 430 200 400 120 350 100Z" fill="#c6c6c6"/>
<path d="M620 250L760 330 1000 280 1250 320 1400 420 1340 640 1150 690 960 640 820 540 700 400Z" fill="#e4e4e4"/>
<path d="M1440 350L1600 330V720L1470 740Z" fill="#a8a8a8"/></g></g>
<g filter="url(#b4)"><g transform="translate(640 140) scale(.41454 .33333)">
<path d="M1190 120L1280 95 1340 150 1440 210 1440 265 1310 250 1230 210Z" fill="#6c6c6c"/>
<path d="M1440 30L1600 20V110Z" fill="#666"/>
<path d="M565 360L590 370 612 430 590 430Z" fill="#444"/>
<path d="M320 130L380 120 400 230 340 220Z" fill="#444"/>
<g fill="none"><path d="M50 420Q80 700 170 740T330 560L400 520" stroke="#888" stroke-width="14"/><path d="M80 360L240 370 400 310M150 450L300 400 400 330M300 500L410 620" stroke="#959595" stroke-width="18"/></g></g></g>
</g>
<g filter="url(#b4)" fill="none"><g transform="translate(640 140) scale(.41454 .33333)"><path d="M1370 780Q1330 1000 1340 1240M1430 740Q1430 900 1390 1000V1200" stroke="#060606" stroke-width="22" opacity=".7"/><path d="M1385 740L1350 700" stroke="#060606" stroke-width="34"/></g></g>
<path d="M650 145h630v820H650z" filter="url(#grain)" style="mix-blend-mode:multiply"/>
<mask id="east" maskUnits="userSpaceOnUse" x="650" y="145" width="640" height="820"><path d="M1160 460L1240 340h50v490h-100z" fill="#999" filter="url(#b18)"/></mask>
<g mask="url(#east)" style="mix-blend-mode:multiply"><path d="M650 145h630v820H650z" filter="url(#streak)"/></g>
<g filter="url(#b4)" fill="#777"><g transform="translate(640 400) scale(.41454 .34436)"><circle cx="812" cy="912" r="12"/><path d="M670 750L695 755 690 830 680 820ZM645 705L675 710 655 730ZM1390 1010L1530 1120V1170L1430 1070Z" fill="#555"/></g></g>
</g>
<g transform="translate(640 400) scale(.41454 .34436)"><path d="M526 854h3v3h-3zM526 926h3v3h-3zM538 964h3v3h-3zM540 1205h3v3h-3zM465 1516h3v3h-3zM502 1545h3v3h-3zM189 72h3v3h-3zM1291 674h3v3h-3zM1233 706h4v3h-4zM1250 813h4v4h-4zM1265 852h3v5h-3zM1280 843h3v8h-3zM1274 866h4v4h-4zM1335 965h5v6h-5zM1343 962h3v6h-3zM1455 640h3v8h-3zM1445 655h4v4h-4zM1455 670h5v12h-5zM1427 692h3v3h-3zM1451 700h8v5h-8zM1444 735h6v5h-6zM1452 745h4v9h-4zM1447 770h5v9h-5zM1440 800h3v3h-3zM1455 850h4v24h-4zM1505 925h6v8h-6zM1512 940h4v5h-4zM1391 1126h3v4h-3zM1411 1126h8v4h-8zM1458 1147h3v3h-3zM1454 1225h6v4h-6zM1457 1235h4v13h-4zM1465 1215h10v4h-10zM1501 1312h4v9h-4zM1507 1321h4v7h-4zM1515 1334h3v4h-3zM748 806h4v3h-4zM757 808h3v3h-3zM775 793h8v4h-8zM1283 340h10v12h-10zM1280 372h5v6h-5z"/><path d="M1115 127h14v3h-14zM1131 132h8v4h-8zM1148 136h5v7h-5zM1158 148h8v4h-8zM1154 157h5v6h-5zM1165 160h4v14h-4zM1173 150h5v5h-5zM1170 176h5v14h-5zM1155 205h3v30h-3zM1128 218h3v20h-3zM1100 222h3v18h-3z" fill="#fff"/></g>
</svg>
</section>
<i class="split right"></i>

<section class="tools">
<div class="ptitle"><i class="hh"></i><span>Processing Toolbox</span><i class="hh"></i><u><svg viewBox="0 0 10 10"><path d="M3.500 3.500v-3h6v5h-3M.5 3.500h6v6h-6zM.5 4h6"/></svg></u><u><svg viewBox="0 0 10 10"><path d="M1 1l8 8M9 1L1 9"/></svg></u></div>
<div class="search">Search...</div>
<div class="tree algs">
<p class="s"><i class="br"><em>−</em></i>Recently used algorithms</p>
<p class="sub"><i class="br thru"></i><i class="br end"></i><svg><use href="#saga"/></svg><span style="margin-left:6px">Catchment area</span></p>
<p><i class="br"><em>+</em></i><svg class="m"><use href="#gdal"/></svg><span style="margin-left:6px">GDAL/OGR [48 geoalgorithms]</span></p>
<p><i class="br"><em>+</em></i><svg class="m"><use href="#grass"/></svg><span style="margin-left:5px">GRASS GIS 7 commands [314 geoalgorithms]</span></p>
<p class="s"><i class="br"><em>+</em></i><svg class="t"><use href="#models"/></svg><span style="margin-left:6px">Models [0 geoalgorithms]</span></p>
<p><i class="br"><em>+</em></i><svg class="m"><use href="#q"/></svg><span style="margin-left:6px">QGIS geoalgorithms [117 geoalgorithms]</span></p>
<p><i class="br"><em>+</em></i><svg><use href="#saga"/></svg><span style="margin-left:6px">SAGA (2.3.2) [353 geoalgorithms]</span></p>
<p class="s"><i class="br end"><em>+</em></i><svg class="t"><use href="#script"/></svg><span style="margin-left:6px">Scripts [0 geoalgorithms]</span></p>
</div>
</section>
</main>

<footer class="status">
<span class="msg">1 legend entries removed.</span>
<span>Coordinate</span><div class="inp coord">12801100,3574396</div>
<svg class="mouse" viewBox="0 0 20 22"><path d="M3 2q4-3 7 3l5 8q2 6-3 7-4 0-6-4L2 7q-1-3 1-5z" fill="#fff" stroke="#222" stroke-width="2"/><path d="M2 4l9 9M5 1l8 11M1 13l4 4M14 5l5-4M16 8l4-3" stroke="#222" stroke-width="1.500"/><circle cx="11" cy="17" r="3" fill="#fff" stroke="#222" stroke-width="1.500"/></svg>
<span class="sc">Scale</span><div class="inp scale">1:34,561,744<u><i class="dd"></i></u></div>
<svg class="lock" viewBox="0 0 16 22"><path d="M3.500 11V6q0-4.500 4.500-4.500T12.500 6v5" fill="none" stroke="#888" stroke-width="2"/><rect y="10" width="16" height="11" rx="1.500" fill="#666"/></svg>
<span class="mg">Magnifier</span><div class="inp spin">100%<u><i class="dd inc"></i><i class="dd"></i></u></div>
<span class="rt">Rotation</span><div class="inp spin">0.0<u><i class="dd inc"></i><i class="dd"></i></u></div>
<i class="check"><svg viewBox="0 0 12 12"><path d="M2 1.500l8 9M10 1.500l-8 9"/></svg></i><span class="rd">Render</span>
<svg class="crs" viewBox="0 0 20 20"><circle cx="10" cy="10" r="8" fill="#999" stroke="#333" stroke-width="2"/><path d="M10 0v20M0 10h20M10 2Q2 10 10 18M10 2q8 8 0 16M4 5q6 3 12 0M4 15q6-3 12 0" stroke="#222" fill="none" stroke-width="1.300"/></svg><span class="ep">EPSG:3857 (OTF)</span>
<svg class="msgi" viewBox="0 0 22 20"><path d="M10 0c6 0 10 3 10 8 0 4-2 6-4 7l3 4-6-3H9C4 16 0 13 0 8s4-8 10-8z" fill="#666"/><circle cx="5.500" cy="8" r="1.600" fill="#fff"/><circle cx="10.500" cy="8" r="1.600" fill="#fff"/><circle cx="15.500" cy="8" r="1.600" fill="#fff"/></svg>
</footer>
</div>

<div class="task">
<div class="start"><svg viewBox="0 0 20 20" width="20" height="20"><path d="M0 3l8-1v7.500H0zM9 1.800L20 0v9.500H9zM0 10.500h8V18l-8-1zM9 10.500h11V20L9 18.200z" fill="#fff"/></svg></div>
<div class="find"><svg class="ring" viewBox="0 0 28 28"><circle cx="14" cy="14" r="11.500" fill="none" stroke="#111" stroke-width="3.600"/></svg><span>Type here to search</span><svg class="mic" viewBox="0 0 14 20"><rect x="4" y=".7" width="6" height="13" rx="1" fill="none" stroke="#333" stroke-width="1.400"/><path d="M1 9v4q0 3 3 3h6q3 0 3-3V9M7 16v3.500M4 19h6" fill="none" stroke="#333" stroke-width="1.400"/></svg></div>
<div class="tic t1"><svg viewBox="0 0 22 20"><path d="M1 0v3.500h12V0M1 20v-3.500h12V20M1 6h12v8H1zM18.500 0v4M18.500 11v9" stroke="#fff" fill="none" stroke-width="1.300"/><path d="M17 6h4v3.500h-4z" fill="#fff"/></svg></div>
<div class="tic"><svg viewBox="0 0 28 28"><circle cx="14" cy="14" r="14" fill="url(#ball)"/><text x="14.500" y="20" text-anchor="middle" font-family="Liberation Serif" font-size="18" fill="#fff">R</text></svg></div>
<div class="tic"><svg viewBox="0 0 28 28"><path d="M.5 3.500h27v21H.5z" fill="#050505" stroke="#aaa"/><path d="M1 4h26v3H1z" fill="#999"/><path d="M3 9l3 1.500L3 12M7 12.500h4" stroke="#ddd" fill="none"/></svg></div>
<div class="tic"><svg viewBox="0 0 28 28"><path d="M3 3h23v13L16 25H3z" fill="#fff"/><path d="M15 25v-9h11z" fill="#222"/></svg></div>
<div class="tic"><svg viewBox="0 0 28 28"><path d="M15 4h12v20H15z" fill="#fff" stroke="#2b579a"/><path d="M17 8h8M17 11h8M17 14h8M17 17h8M17 20h8" stroke="#2b579a"/><path d="M0 3l17-3v28L0 25z" fill="#2b579a"/><text x="8" y="19" text-anchor="middle" font-weight="bold" font-size="13" fill="#fff">W</text></svg></div>
<div class="tic"><svg viewBox="0 0 28 28"><path d="M0 0h28v28H0z" fill="#21d789"/><path d="M28 0v28H12z" fill="#f3ee4a"/><path d="M18 0h10v14z" fill="#25bdeb"/><path d="M4 4h20v20H4z" fill="#080808"/><text x="14" y="15" text-anchor="middle" font-weight="bold" font-size="12" fill="#fff">PC</text><path d="M6 20.500h8" stroke="#fff" stroke-width="1.700"/></svg></div>
<div class="tic"><svg viewBox="0 0 28 28"><circle cx="14" cy="15" r="13" fill="#ff5b2e"/><path d="M18 0c8 5 10 10 9 17-2 7-8 11-14 10 7-3 12-11 5-27z" fill="#ffc52c"/><circle cx="14.500" cy="14" r="7" fill="#2550b5"/><path d="M2 8l3-4 1 3c4-1 6 0 8 2l-4 4c1 5 6 5 9 3-3 6-12 6-14-1z" fill="#ff8a22"/></svg></div>
<div class="app a1"><svg viewBox="0 0 28 28"><path d="M5 2h12v22H5z" fill="#f4cf73"/><path d="M5 2l6 3v23l-6-4z" fill="#ffe39b"/><path d="M17 14h5v10h-5z" fill="#f7d785"/></svg><span>blog</span></div>
<div class="app a2"><svg viewBox="0 0 28 28"><circle cx="14" cy="14" r="14" fill="#fcc934"/><path d="M2 7A14 14 0 0 1 26.500 8H14L8 17z" fill="#e0443a"/><path d="M2 7l6 10 8 3-4 8A14 14 0 0 1 2 7z" fill="#2ca050"/><circle cx="14" cy="14" r="6.500" fill="#fff"/><circle cx="14" cy="14" r="5" fill="#4285f4"/></svg><span>Editing craigdsouza...</span></div>
<div class="app a3"><svg viewBox="0 0 24 24"><use href="#q"/></svg><span>QGIS 2.18.20 - ken-r...</span></div>
<div class="tray">
<svg class="people" viewBox="0 0 18 20"><circle cx="12.500" cy="4" r="3" /><circle cx="5" cy="9" r="3"/><path d="M8 12q1-5 5-4.500 4 .5 4 5M1 19q0-6 4-6.500 4 .5 5 6.500"/></svg>
<svg viewBox="0 0 16 10" class="chev"><path d="M0 9l8-8 8 8"/></svg>
<svg class="cloud" viewBox="0 0 21 14"><path d="M5 14q-5 0-5-4 0-3 4-4Q5 0 11 0q4 0 5 5 5 0 5 5 0 4-4 4z" fill="#fff" stroke="none"/></svg>
<svg class="bat" viewBox="0 0 20 14"><path d="M6 3h12v9H5V8M18 5.500h2v4h-2M1 1v3h5V1M3.500 4v4H5M2 0v2M5 0v2"/></svg>
<svg class="wifi" viewBox="0 0 18 18"><path d="M1 17Q1 2 16 2M5 17Q5 6 16 6M9 17q0-7 7-7M13 17q0-3 3-3"/></svg>
<svg class="snd" viewBox="0 0 20 16"><path d="M1 5h3l4-4v14l-4-4H1zM11 5q2 3 0 6"/><path d="M14 3q3 5 0 10M17 1q4 7 0 14" opacity=".5"/></svg>
<div class="clock"><span>21:42</span><span>20-06-2018</span></div>
<div class="note"><svg viewBox="0 0 20 20"><path d="M0 0h20v16h-8l-5 4v-4H0z" fill="#fff" stroke="none"/><path d="M3 4h14M3 8h14M3 12h9" stroke="#222"/></svg><span>3</span></div>
<i class="peek"></i>
</div>
</div>
</body>
</html>
```
FILE: styles.css
```css
* { box-sizing: border-box; }
body { margin: 0; width: 1920px; height: 1080px; overflow: hidden; background: #f0f0f0; color: #000; font: 12.500px "DejaVu Sans Condensed", "DejaVu Sans", sans-serif; font-stretch: condensed; white-space: nowrap; }
.defs { display: block; height: 0; }
i, b, u, em { font-style: normal; font-weight: normal; text-decoration: none; }
svg { display: block; flex: none; }
.window { height: 1030px; display: flex; flex-direction: column; }
.title { height: 30px; background: #fff; display: flex; align-items: center; padding-left: 3px; gap: 6px; }
.i20 { width: 18px; height: 22px; }
.seg, .task { font-family: "Open Sans", "Noto Sans", sans-serif; font-stretch: normal; }
.seg { font-size: 14.500px; letter-spacing: -.25px; margin-top: -2px; }
.winbtns { margin-left: auto; display: flex; gap: 46px; padding: 0 26px 2px 0; }
.winbtns svg { width: 12px; height: 12px; fill: none; stroke: #000; }
.menu { height: 25px; display: flex; align-items: center; padding-left: 10px; border-bottom: 1px solid #b4b4b4; letter-spacing: .05px; }
.bar { height: 39px; display: flex; align-items: center; border-bottom: 1px solid #b4b4b4; border-top: 1px solid #fcfcfc; padding-bottom: 1px; }
.bar b { width: 35px; height: 34px; display: flex; align-items: center; justify-content: center; position: relative; }
.bar svg { width: 23px; height: 24px; }
.bar b.on { background: #d4d4d4; border: 1px solid #777; border-radius: 3px; width: 33px; margin: 0 1px; }
.h { width: 7.500px; height: 28px; margin-left: 6.500px; background: radial-gradient(circle, #c2c2c2 1.200px, transparent 1.500px) 0 0/4px 5px repeat-y, radial-gradient(circle, #c2c2c2 1.200px, transparent 1.500px) 4px 2px/4px 5px repeat-y; }
.h.first { margin-left: 4px; }
.dd { width: 15px; display: flex; justify-content: center; }
.dd::before { content: ""; border: 5px solid transparent; border-top-color: #000; border-bottom: 0; }
.dd.g::before { border-top-color: #999; }
.dd.inc::before { transform: scaleY(-1); }
.corner { position: absolute; right: 1px; bottom: 4px; }
main { height: 863px; display: flex; }
.side { width: 55px; border-right: 1px solid #b4b4b4; display: flex; flex-direction: column; padding-top: 6px; }
.side b { height: 33.900px; display: flex; align-items: center; padding-left: 8px; flex: none; }
.side .hh + b { margin-top: -1px; }
.side b svg { width: 24px; height: 24px; }
.side b .dd { margin-left: 4px; }
.hh { height: 6px; background: radial-gradient(circle, #c4c4c4 1.200px, transparent 1.500px) 0 0/6px 3px repeat-x, radial-gradient(circle, #c4c4c4 1.200px, transparent 1.500px) 3px 3px/6px 3px repeat-x; }
.side .hh { margin: 0 3px; height: 6px; }
.side .hh:last-child { margin-top: 9px; }
.left { width: 348px; display: flex; flex-direction: column; }
.ptitle { height: 21px; display: flex; align-items: center; padding: 0 0 0 3px; margin-top: 1px; }
.ptitle .hh { flex: 1; margin-bottom: 3px; }
.ptitle span { padding: 0 9px 0; letter-spacing: .05px; }
.ptitle .hh:nth-of-type(2) { margin-right: 3px; }
.ptitle u { width: 15px; height: 15px; border: 1px solid #777; border-radius: 2px; background: #f5f5f5; display: flex; align-items: center; justify-content: center; margin: 0 1px 3px 0; }
.ptitle u svg { width: 9px; height: 9px; fill: none; stroke: #000; stroke-width: 1.500; }
.pbar { height: 31px; display: flex; align-items: center; padding: 0 0 0 2px; }
.pbar b { width: 27px; display: flex; justify-content: center; }
.pbar svg { width: 15px; height: 15px; }
.pbar .dd { width: 14px; }
.pbar .dd + b { margin-left: 2px; }
.tree { background: #fff; border: 2px solid #bdbdbd; border-radius: 2px; width: 349px; margin-left: -1px; letter-spacing: .07px; }
.tree p { margin: 0; height: 20px; display: flex; align-items: center; }
.tree p.s { height: 16px; }
.tree svg { width: 20px; height: 20px; margin-right: 6.500px; }
.tree svg.f { width: 15px; height: 16px; margin: 0 5.500px 0 2px; }
.browser { height: 455px; }
.br { width: 24px; flex: none; align-self: stretch; display: flex; align-items: center; padding-left: 6px; background: repeating-linear-gradient(#999 0 1px, #fff 1px 2px) 10px 0/1px 100% no-repeat, repeating-linear-gradient(90deg, #999 0 1px, transparent 1px 2px) 10px 50%/11px 1px no-repeat; }
.br.end { background-size: 1px 50%, 11px 1px; }
.br.thru { background-size: 1px 100%, 0 0; }
.br em { width: 9px; height: 9px; border: 1px solid #888; background: #fff; font: 10px/7px "DejaVu Sans", sans-serif; display: flex; justify-content: center; align-items: center; color: #333; }
.dots { height: 3px; width: 112px; margin: 2px auto 0; background: radial-gradient(circle, #c4c4c4 1.100px, transparent 1.400px) 0 0/5px 3px repeat-x; }
.ptitle.low { margin-top: 1px; height: 23px; }
.layers { flex: 1; border-color: #4f9fe2; }
.sel { background: #0078d7; color: #fff; }
.sel .check { margin: 0 7px 0 1px; }
.check { width: 14px; height: 15px; background: #fff; border: 1px solid #999; display: flex; align-items: center; justify-content: center; flex: none; }
.check svg { width: 12px; height: 12px; margin: 0; stroke: #000; stroke-width: 3; }
.sel strong { text-decoration: underline; flex: 1; border: 1px dotted #d68a3c; line-height: 18px; padding-left: 2px; margin-right: 1px; font-stretch: condensed; letter-spacing: .2px; }
.sel svg.rs { margin-right: 3px; }
.leaf { padding-left: 20px; }
.sw { width: 16px; height: 16px; background: #000; margin-right: 6px; flex: none; }
.leaf .br { width: 24px; }
.sw.none { background: none; }
.split { width: 6px; background: radial-gradient(circle, #c4c4c4 1.100px, transparent 1.400px) 1px 0/4px 5px repeat-y; background-clip: content-box; padding: 287px 0; }
.split.right { width: 7px; }
.canvas { width: 1111px; background: #fff; border: 1px solid #b4b4b4; border-radius: 2px; margin-top: 1px; padding: 20px 0 0 250px; }
.tools { flex: 1; display: flex; flex-direction: column; margin-left: -1px; }
.search { height: 22px; background: #fff; border: 2px solid #bdbdbd; border-radius: 2px; color: #888; line-height: 18px; padding-left: 3px; margin-top: 1px; letter-spacing: .2px; }
.tools .ptitle { height: 20px; }
.tools .tree { flex: 1; width: auto; margin: 0; }
.tree.algs svg { margin: 0; }
.tree.algs svg.m { width: 18px; }
.tree.algs svg.t { width: 16px; height: 16px; }
.tree.algs p { letter-spacing: .11px; }
.tree.algs p.sub { height: 20px; }
.algs .br { padding-left: 5px; width: 23px; }
.algs .sub .br.end { margin-left: -3px; }
.status { height: 34px; display: flex; align-items: center; padding: 0 0 0 6px; }
.msg { width: 837px; letter-spacing: .07px; }
.inp { height: 22px; border: 1px solid #b0b0b0; border-radius: 2px; background: #fff; display: flex; align-items: center; }
.status > span:nth-of-type(2) { width: 65px; }
.coord { width: 246px; justify-content: center; }
.mouse { width: 20px; height: 22px; margin-left: 5px; }
.sc { width: 34px; margin-left: 14px; }
.scale { width: 98px; }
.inp u { margin-left: auto; width: 16px; height: 100%; border-left: 1px solid #b0b0b0; display: flex; flex-direction: column; justify-content: space-around; align-items: center; background: #f4f4f4; }
.inp .dd::before { border-width: 5px 4px 0; }
.lock { width: 16px; height: 22px; margin-left: 7px; }
.mg { width: 57px; margin-left: 16px; }
.spin { width: 80px; padding-left: 4px; }
.rt { width: 55px; margin-left: 10px; }
.status .check { margin-left: 8px; }
.rd { margin-left: 7px; width: 59px; }
.crs { width: 20px; height: 20px; }
.ep { margin-left: 4px; width: 125px; letter-spacing: .2px; }
.msgi { width: 22px; height: 20px; }
.task { height: 50px; background: #131616; display: flex; color: #fff; font-size: 15px; }
.start { width: 60px; display: flex; align-items: center; justify-content: center; }
.find { width: 430px; background: #f2f2f2; border-top: 1px solid #bbb; color: #444; display: flex; align-items: center; padding: 0 18px 0 11px; font-size: 17px; letter-spacing: -.2px; }
.ring { width: 28px; height: 28px; margin-right: 11px; }
.mic { width: 14px; height: 20px; margin-left: auto; }
.tic { width: 62.500px; display: flex; align-items: center; justify-content: center; }
.tic svg, .app svg { width: 28px; height: 28px; }
.tic.t1 { width: 61px; }
.tic.t1 svg { width: 22px; height: 20px; }
.app { display: flex; align-items: center; border-bottom: 3px solid #76b9ed; padding-top: 3px; font-size: 15px; letter-spacing: -.45px; }
.a1 { width: 190px; margin-left: 5px; padding-left: 7px; gap: 7px; }
.a2 { width: 190px; margin-left: 11px; padding-left: 9px; gap: 5px; }
.a3 { width: 200px; margin-left: 6px; padding-left: 14px; gap: 5px; background: #484846; }
.tray { flex: 1; display: flex; align-items: center; }
.tray svg { fill: none; stroke: #fff; stroke-width: 1.300; }
.people { width: 18px; height: 20px; margin-left: 45px; }
.chev { width: 16px; height: 10px; margin-left: 28px; }
.cloud { width: 21px; height: 14px; margin-left: 11px; }
.bat { width: 20px; height: 14px; margin-left: 10px; }
.wifi { width: 17px; height: 18px; margin-left: 12px; }
.snd { width: 20px; height: 16px; margin-left: 11px; }
.clock { width: 90px; margin-left: 6px; display: flex; flex-direction: column; align-items: center; font-size: 14.500px; line-height: 23px; letter-spacing: -.2px; }
.note { margin-left: 16px; position: relative; }
.note svg { width: 20px; height: 20px; }
.note span { position: absolute; left: 9px; top: 8px; width: 20px; height: 20px; border-radius: 50%; background: #333; border: 1px solid #888; font-size: 12px; line-height: 18px; text-align: center; }
.peek { margin-left: auto; margin-right: 5px; width: 1px; height: 50px; background: #666; }
```
